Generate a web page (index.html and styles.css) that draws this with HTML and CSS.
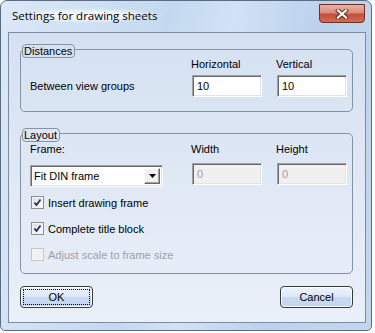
FILE: index.html
```html
<!DOCTYPE html>
<html lang="en">
<head>
    <meta charset="UTF-8">
    <title>Settings for drawing sheets</title>
    <link rel="stylesheet" href="styles.css">
</head>
<body>
    <div class="window">
        <div class="titlebar">
            <span class="title">Settings for drawing sheets</span>
            <span class="close">
                <svg width="14" height="10" viewBox="0 0 14 10">
                    <path d="M3 1.5 L11 8.5 M11 1.5 L3 8.5" stroke="#5a2a22" stroke-width="4" stroke-linecap="square"/>
                    <path d="M3 1.5 L11 8.5 M11 1.5 L3 8.5" stroke="#fff" stroke-width="2.2" stroke-linecap="square"/>
                </svg>
            </span>
        </div>
        <div class="client">
            <div class="group">
                <span class="legend">Distances</span>
                <div class="grid">
                    <span></span>
                    <span class="lbl">Horizontal</span>
                    <span class="lbl">Vertical</span>
                    <span class="lbl">Between view groups</span>
                    <input class="edit" type="text" value="10">
                    <input class="edit" type="text" value="10">
                </div>
            </div>
            <div class="group layout">
                <span class="legend">Layout</span>
                <div class="grid">
                    <span class="lbl">Frame:</span>
                    <span class="lbl">Width</span>
                    <span class="lbl">Height</span>
                    <div class="combo">
                        <span class="combo-text">Fit DIN frame</span>
                        <span class="combo-btn">
                            <svg width="7" height="4" viewBox="0 0 7 4"><path d="M0 0 H7 L3.5 4 Z" fill="#000"/></svg>
                        </span>
                    </div>
                    <input class="edit" type="text" value="0" disabled>
                    <input class="edit" type="text" value="0" disabled>
                </div>
                <div class="checks">
                    <label class="check"><span class="box on"><svg width="9" height="9" viewBox="0 0 9 9"><path d="M1.5 4.5 L3.5 7 L7.5 1.5" fill="none" stroke="#1f2e7a" stroke-width="1.8"/></svg></span>Insert drawing frame</label>
                    <label class="check"><span class="box on"><svg width="9" height="9" viewBox="0 0 9 9"><path d="M1.5 4.5 L3.5 7 L7.5 1.5" fill="none" stroke="#1f2e7a" stroke-width="1.8"/></svg></span>Complete title block</label>
                    <label class="check off"><span class="box"></span>Adjust scale to frame size</label>
                </div>
            </div>
            <div class="buttons">
                <button class="btn ok">OK</button>
                <button class="btn">Cancel</button>
            </div>
        </div>
    </div>
</body>
</html>
```

FILE: styles.css
```css
body {
    margin: 0;
    background: #fff;
    font-family: "Liberation Sans", Arial, sans-serif;
    font-size: 11px;
    color: #000;
}
.window {
    width: 370px;
    height: 329px;
    border: 1px solid #5a6b82;
    border-radius: 7px 7px 5px 5px;
    background: linear-gradient(100deg, #dbe8f7 0%, #c4d9f0 40%, #d0e2f5 55%, #bcd2ec 75%, #c3d6ee 100%);
    display: flex;
    flex-direction: column;
}
.titlebar {
    height: 31px;
    display: flex;
    justify-content: space-between;
    align-items: flex-start;
}
.title {
    font-family: "Open Sans", "Noto Sans", sans-serif;
    font-size: 11.5px;
    margin: 7px 0 0 10px;
    padding: 0 6px 0 1px;
    background: radial-gradient(ellipse at center, rgba(255,255,255,0.75) 30%, rgba(255,255,255,0) 72%);
}
.close {
    width: 44px;
    height: 17px;
    margin: 3px 6px 0 0;
    border: 1px solid #6e2e24;
    border-radius: 0 0 4px 4px;
    background: linear-gradient(to bottom, #eab3a8 0%, #d98a7b 45%, #c44e3a 55%, #d26c55 100%);
    display: flex;
    justify-content: center;
    align-items: center;
}
.client {
    margin: 0 5px 0 7px;
    height: 289px;
    border: 1px solid #7d8ca1;
    background: linear-gradient(to bottom, #d5e1f2 0%, #dfe8f5 50%, #eaf0f9 100%);
    padding: 16px 12px 0 11px;
    box-sizing: border-box;
    height: 291px;
}
.group {
    border: 1px solid #8592a3;
    border-radius: 5px;
    padding: 0 4px 14px 9px;
}
.layout {
    margin-top: 21px;
    padding-bottom: 12px;
}
.legend {
    display: block;
    width: fit-content;
    height: 12px;
    line-height: 12px;
    margin: -6px 0 0 -8px;
    padding: 0 2px 0 1px;
    border: 1px solid #8592a3;
    border-radius: 4px;
    background: #d6e2f2;
}
.layout .legend {
    background: #dce6f4;
}
.grid {
    display: grid;
    grid-template-columns: 147px 70px 70px;
    column-gap: 15px;
    grid-template-rows: 13px 22px;
    row-gap: 4px;
    align-items: center;
}
.layout .grid {
    row-gap: 7px;
    align-items: start;
    margin-top: 1px;
}
.lbl {
    line-height: 13px;
}
.grid .lbl:nth-child(2), .grid .lbl:nth-child(3) {
    margin-left: -1px;
}
.edit {
    width: 70px;
    height: 22px;
    box-sizing: border-box;
    margin: 0;
    padding: 0 0 0 4px;
    font: inherit;
    color: #000;
    background: #fff;
    border: 1px solid;
    border-color: #a0a0a0 #fff #fff #a0a0a0;
    box-shadow: inset 1px 1px #696969, inset -1px -1px #e3e3e3;
}
.edit:disabled {
    background: #f0f0f0;
    color: #a0a0a0;
}
.combo {
    width: 133px;
    height: 22px;
    box-sizing: border-box;
    margin-top: 2px;
    border: 1px solid;
    border-color: #a0a0a0 #fff #fff #a0a0a0;
    box-shadow: inset 1px 1px #696969, inset -1px -1px #e3e3e3;
    background: #fff;
    display: flex;
    align-items: center;
    padding: 2px;
}
.combo-text {
    flex: 1;
    padding-left: 1px;
}
.combo-btn {
    width: 16px;
    height: 16px;
    box-sizing: border-box;
    background: #f0f0f0;
    border: 1px solid;
    border-color: #fff #696969 #696969 #fff;
    box-shadow: inset -1px -1px #a0a0a0;
    display: flex;
    justify-content: center;
    align-items: center;
}
.checks {
    margin-top: 11px;
    display: flex;
    flex-direction: column;
    gap: 13px;
}
.check {
    display: flex;
    align-items: center;
    height: 13px;
    margin-left: 1px;
    gap: 4px;
}
.box {
    width: 13px;
    height: 13px;
    box-sizing: border-box;
    border: 1px solid #8e8f8f;
    background: linear-gradient(135deg, #d6d7d9 0%, #f4f4f4 60%, #fff 100%);
    box-shadow: inset 0 0 0 1px #f4f4f4;
    display: flex;
    justify-content: center;
    align-items: center;
}
.check.off {
    color: #a0a0a0;
}
.check.off .box {
    border-color: #c7c8c9;
    background: #f0f1f2;
}
.buttons {
    display: flex;
    justify-content: space-between;
    margin-top: 12px;
    padding-right: 0;
}
.btn {
    width: 73px;
    height: 22px;
    margin: 0;
    font: inherit;
    color: #000;
    border: 1px solid #3a3a3a;
    border-radius: 4px;
    background: linear-gradient(to bottom, #eef3fb 0%, #dde8f6 48%, #c9daf0 52%, #c2d5ee 100%);
    box-shadow: inset 0 0 0 1px #f7faff;
}
.ok {
    outline: 1px dotted #000;
    outline-offset: -4px;
}
```
